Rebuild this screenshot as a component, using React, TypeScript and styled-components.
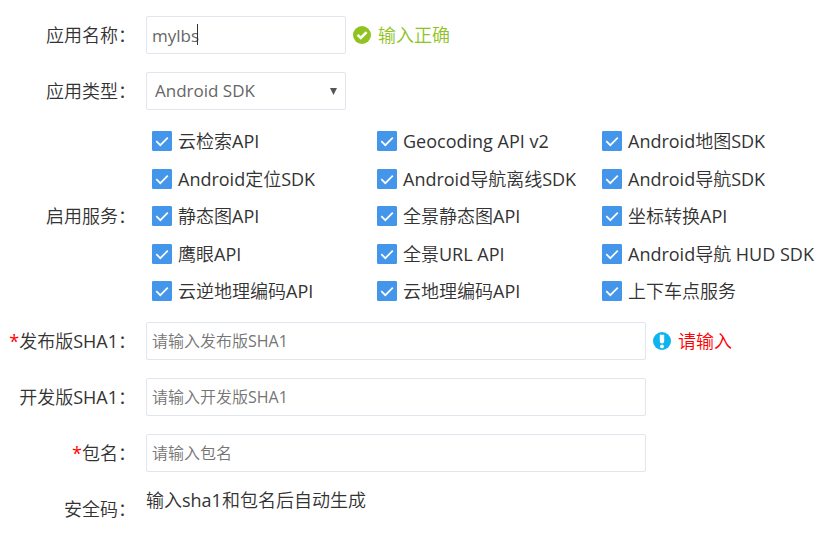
import React, { useState } from "react";
import styled, { createGlobalStyle } from "styled-components";

const GlobalStyle = createGlobalStyle`
  *, *::before, *::after { box-sizing: border-box; }
  body {
    margin: 0;
    background: #fff;
    color: #333;
    font-family: "Open Sans", "Noto Sans CJK SC DemiLight", "Noto Sans CJK SC", sans-serif;
    font-size: 18px;
    font-weight: 400;
    line-height: 20px;
  }
  input, select, button { font: inherit; }
`;

const Form = styled.form`
  display: flex;
  flex-direction: column;
  gap: 18px;
  padding: 16px 0 10px;
`;

const Row = styled.div`
  display: grid;
  grid-template-columns: 136px minmax(0, 1fr);
  column-gap: 10px;
  align-items: center;
`;

const labelStyles = `
  min-height: 38px;
  line-height: 38px;
  text-align: right;
  white-space: nowrap;
`;

const Label = styled.label`
  ${labelStyles}
`;

const Caption = styled.span`
  ${labelStyles}
`;

const Star = styled.span`
  color: #f00;
`;

const Field = styled.div`
  display: flex;
  align-items: center;
  gap: 7px;
`;

const Control = styled.div<{ $wide?: boolean }>`
  position: relative;
  flex: 0 1 ${(p) => (p.$wide ? "500px" : "200px")};
  color: #666;
`;

const TextInput = styled.input`
  display: block;
  width: 100%;
  height: 38px;
  padding: 0 5px;
  border: 1px solid #e1e6ee;
  border-radius: 2px;
  outline: none;
  background: #fff;
  color: #666;
  font-size: 16px;
  &::placeholder {
    color: #757575;
    opacity: 1;
  }
`;

const NameInput = styled(TextInput)`
  font-size: 17px;
  caret-color: transparent;
`;

const Caret = styled.span`
  position: absolute;
  top: 8px;
  left: 51px;
  width: 1px;
  height: 21px;
  background: #333;
`;

const Select = styled.select`
  display: block;
  appearance: none;
  width: 100%;
  height: 38px;
  padding: 0 24px 0 8px;
  border: 1px solid #e1e6ee;
  border-radius: 2px;
  outline: none;
  background: #fff;
  color: #666;
  font-size: 17px;
`;

const Arrow = styled.svg`
  position: absolute;
  top: 16px;
  right: 9px;
  pointer-events: none;
`;

const Status = styled.span<{ $ok?: boolean }>`
  display: flex;
  align-items: center;
  gap: 7px;
  white-space: nowrap;
  color: ${(p) => (p.$ok ? "#8fc31f" : "#f00")};
`;

const Services = styled.div`
  display: grid;
  grid-template-columns: repeat(3, minmax(0, 225px));
  align-content: space-between;
  min-height: 176px;
  padding: 3px 0 3px 6px;
`;

const Service = styled.label`
  display: flex;
  align-items: center;
  gap: 6px;
  white-space: nowrap;
`;

const Tick = styled.span`
  position: relative;
  display: flex;
  flex: none;
  width: 20px;
  height: 20px;
`;

const TickInput = styled.input`
  appearance: none;
  width: 20px;
  height: 20px;
  margin: 0;
  border: 1px solid #c8d0dc;
  border-radius: 1px;
  background: #fff;
  &:checked {
    border-color: #4496eb;
    background: #4496eb;
  }
`;

const TickMark = styled.svg`
  position: absolute;
  inset: 0;
  pointer-events: none;
`;

const Output = styled.output`
  align-self: start;
`;

const services = [
  "云检索API", "Geocoding API v2", "Android地图SDK",
  "Android定位SDK", "Android导航离线SDK", "Android导航SDK",
  "静态图API", "全景静态图API", "坐标转换API",
  "鹰眼API", "全景URL API", "Android导航 HUD SDK",
  "云逆地理编码API", "云地理编码API", "上下车点服务",
];

function ServiceOption({ name }: { name: string }) {
  return (
    <Service>
      <Tick>
        <TickInput type="checkbox" defaultChecked />
        <TickMark width="20" height="20" viewBox="0 0 20 20">
          <path d="M4.3 10.2l4 4L15.8 6.6" fill="none" stroke="#fff" strokeWidth="1.7" />
        </TickMark>
      </Tick>
      {name}
    </Service>
  );
}

function OkIcon() {
  return (
    <svg width="18" height="18" viewBox="0 0 18 18" aria-hidden="true">
      <circle cx="9" cy="9" r="9" fill="#8fc31f" />
      <path d="M4.6 8.8l3.2 3.2 5.8-5.8" fill="none" stroke="#fff" strokeWidth="2.6" />
    </svg>
  );
}

function AlertIcon() {
  return (
    <svg width="18" height="18" viewBox="0 0 18 18" aria-hidden="true">
      <circle cx="9" cy="9" r="9" fill="#0db5ee" />
      <path d="M6.8 2.8h4.4v6.4q0 2.4-2.2 2.4t-2.2-2.4z" fill="#fff" />
      <circle cx="9" cy="14.4" r="1.9" fill="#fff" />
    </svg>
  );
}

export default function App() {
  const [name, setName] = useState("mylbs");
  return (
    <>
      <GlobalStyle />
      <Form>
        <Row>
          <Label htmlFor="name">应用名称：</Label>
          <Field>
            <Control>
              <NameInput id="name" value={name} onChange={(e) => setName(e.target.value)} />
              {name === "mylbs" && <Caret />}
            </Control>
            <Status $ok><OkIcon />输入正确</Status>
          </Field>
        </Row>
        <Row>
          <Label htmlFor="type">应用类型：</Label>
          <Field>
            <Control>
              <Select id="type"><option>Android SDK</option></Select>
              <Arrow width="7" height="7" viewBox="0 0 7 7"><path d="M0 0h7L3.5 7z" fill="#555" /></Arrow>
            </Control>
          </Field>
        </Row>
        <Row role="group" aria-labelledby="services">
          <Caption id="services">启用服务：</Caption>
          <Services>
            {services.map((s) => <ServiceOption key={s} name={s} />)}
          </Services>
        </Row>
        <Row>
          <Label htmlFor="release"><Star>*</Star>发布版SHA1：</Label>
          <Field>
            <Control $wide><TextInput id="release" placeholder="请输入发布版SHA1" /></Control>
            <Status><AlertIcon />请输入</Status>
          </Field>
        </Row>
        <Row>
          <Label htmlFor="dev">开发版SHA1：</Label>
          <Field>
            <Control $wide><TextInput id="dev" placeholder="请输入开发版SHA1" /></Control>
          </Field>
        </Row>
        <Row>
          <Label htmlFor="pkg"><Star>*</Star>包名：</Label>
          <Field>
            <Control $wide><TextInput id="pkg" placeholder="请输入包名" /></Control>
          </Field>
        </Row>
        <Row>
          <Label htmlFor="code">安全码：</Label>
          <Output id="code">输入sha1和包名后自动生成</Output>
        </Row>
      </Form>
    </>
  );
}
